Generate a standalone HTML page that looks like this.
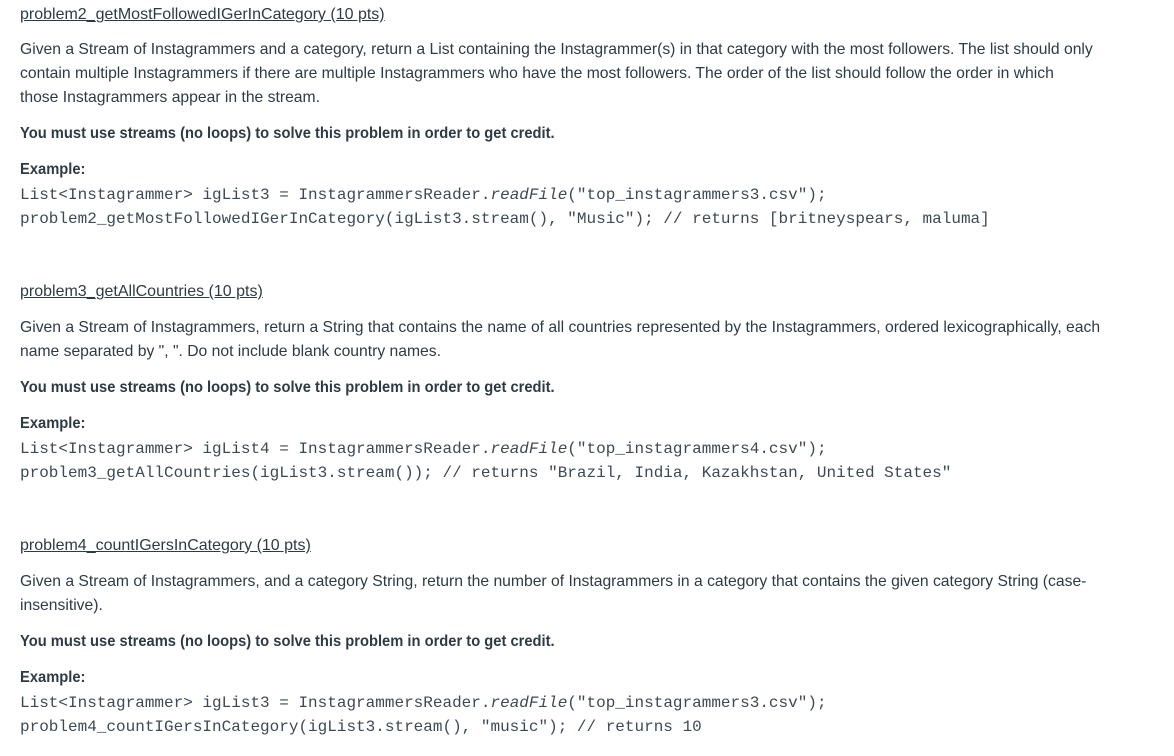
<!DOCTYPE html>
<html><head><style>
body{margin:0;background:#fff;color:#2d3b45;font-family:"Liberation Sans",sans-serif;font-size:15.7px;}
.a{position:absolute;left:20px;white-space:nowrap;line-height:24px}
.h{text-decoration:underline;font-size:16px}
.b{font-weight:bold;font-size:16px;transform:scaleX(0.92);transform-origin:0 0}
.c{font-family:"Liberation Mono",monospace;font-size:16px;color:#3d4a54}
i{font-style:italic}
</style></head><body>
<div class="a h" style="top:3px">problem2_getMostFollowedIGerInCategory (10 pts)</div>
<div class="a" style="top:38px">Given a Stream of Instagrammers and a category, return a List containing the Instagrammer(s) in that category with the most followers. The list should only</div>
<div class="a" style="top:62px">contain multiple Instagrammers if there are multiple Instagrammers who have the most followers. The order of the list should follow the order in which</div>
<div class="a" style="top:86px">those Instagrammers appear in the stream.</div>
<div class="a b" style="top:122px">You must use streams (no loops) to solve this problem in order to get credit.</div>
<div class="a b" style="top:158px">Example:</div>
<div class="a c" style="top:183px">List&lt;Instagrammer&gt; igList3 = InstagrammersReader.<i>readFile</i>("top_instagrammers3.csv");</div>
<div class="a c" style="top:207px">problem2_getMostFollowedIGerInCategory(igList3.stream(), "Music"); // returns [britneyspears, maluma]</div>

<div class="a h" style="top:280px">problem3_getAllCountries (10 pts)</div>
<div class="a" style="top:316px">Given a Stream of Instagrammers, return a String that contains the name of all countries represented by the Instagrammers, ordered lexicographically, each</div>
<div class="a" style="top:340px">name separated by ", ". Do not include blank country names.</div>
<div class="a b" style="top:376px">You must use streams (no loops) to solve this problem in order to get credit.</div>
<div class="a b" style="top:412px">Example:</div>
<div class="a c" style="top:437px">List&lt;Instagrammer&gt; igList4 = InstagrammersReader.<i>readFile</i>("top_instagrammers4.csv");</div>
<div class="a c" style="top:461px">problem3_getAllCountries(igList3.stream()); // returns "Brazil, India, Kazakhstan, United States"</div>

<div class="a h" style="top:534px">problem4_countIGersInCategory (10 pts)</div>
<div class="a" style="top:570px">Given a Stream of Instagrammers, and a category String, return the number of Instagrammers in a category that contains the given category String (case-</div>
<div class="a" style="top:594px">insensitive).</div>
<div class="a b" style="top:630px">You must use streams (no loops) to solve this problem in order to get credit.</div>
<div class="a b" style="top:666px">Example:</div>
<div class="a c" style="top:691px">List&lt;Instagrammer&gt; igList3 = InstagrammersReader.<i>readFile</i>("top_instagrammers3.csv");</div>
<div class="a c" style="top:715px">problem4_countIGersInCategory(igList3.stream(), "music"); // returns 10</div>
</body></html>
